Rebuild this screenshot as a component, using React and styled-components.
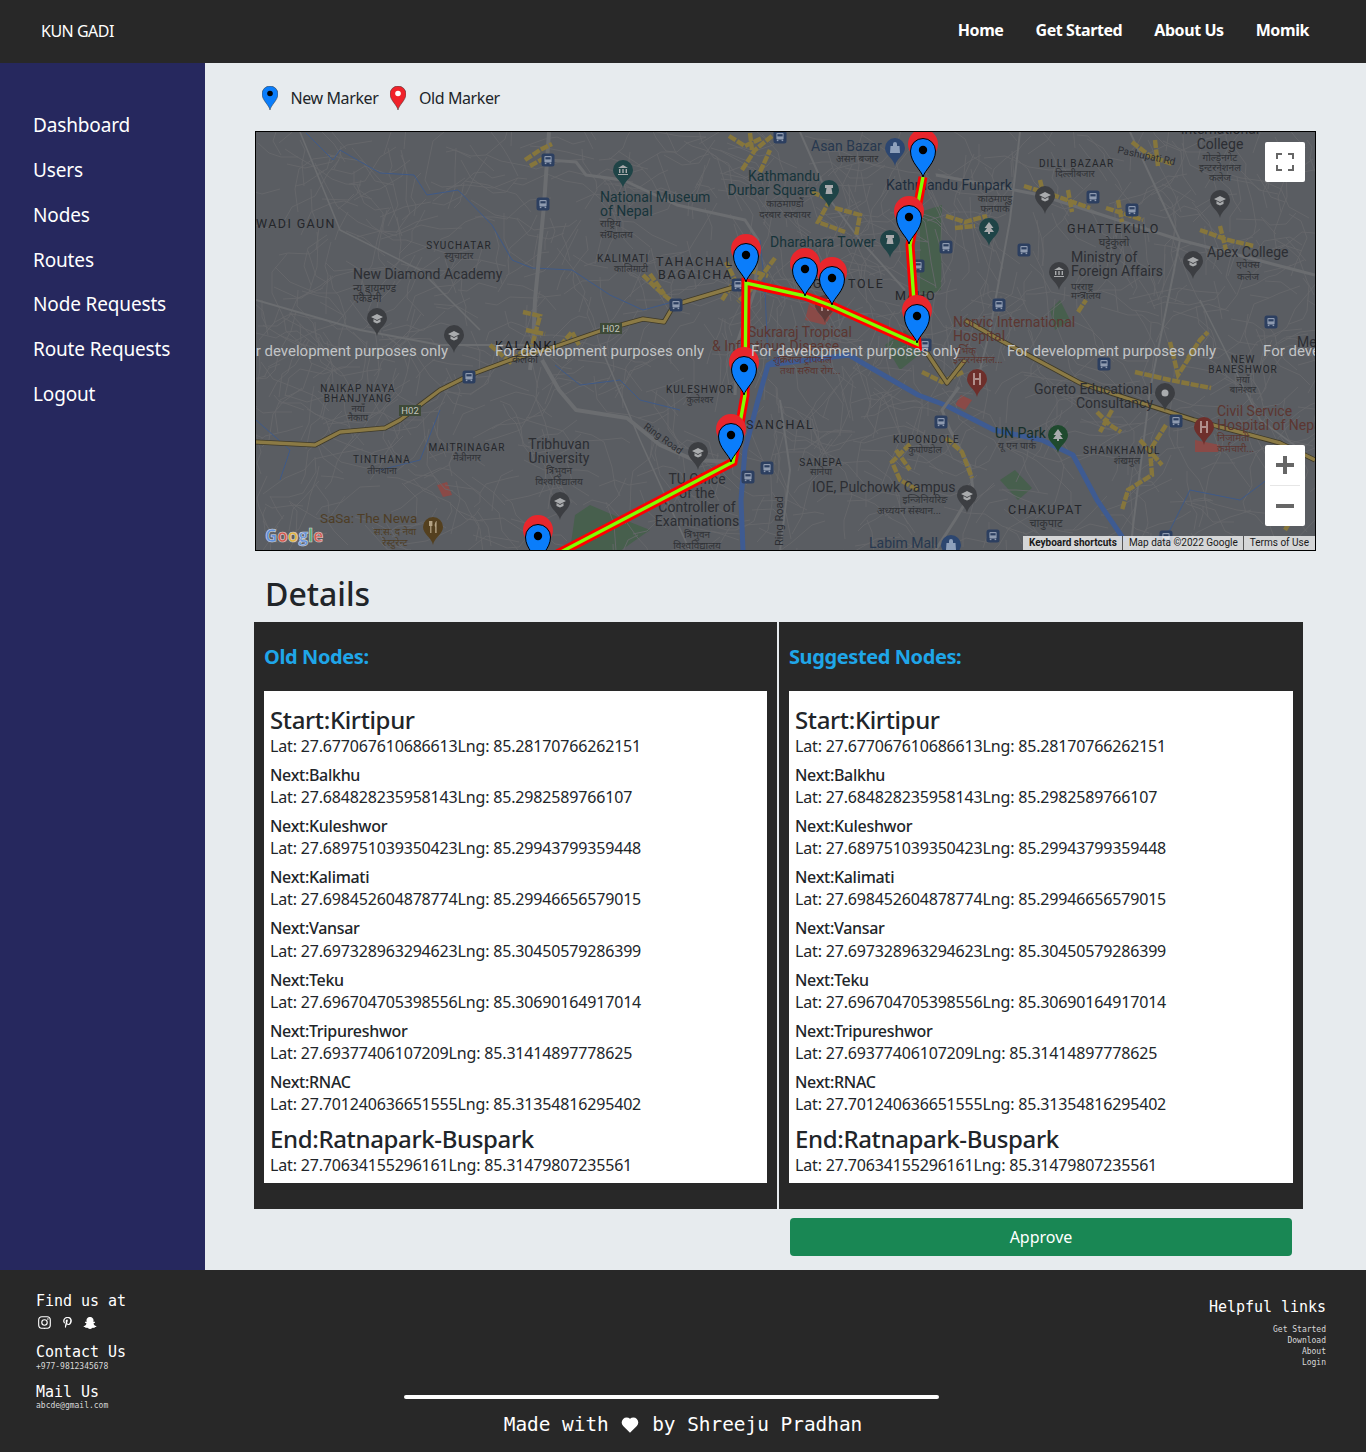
import React from "react";
import styled, { createGlobalStyle } from "styled-components";
import { BiLogoInstagram, BiLogoPinterestAlt, BiLogoSnapchat, BiSolidHeart } from "react-icons/bi";

const UI_FONT = `"Noto Sans", "Open Sans", sans-serif`;
const MONO_FONT = `"DejaVu Sans Mono", "Liberation Mono", monospace`;

const GlobalStyle = createGlobalStyle`
  html, body {
    margin: 0;
    padding: 0;
  }
  body {
    font-family: ${UI_FONT};
    font-size: 16px;
    color: #212529;
    background: #e7ebee;
  }
  * {
    box-sizing: border-box;
  }
`;

const oldNodes = [
  { name: "Balkhu", lat: "27.684828235958143", lng: "85.2982589766107" },
  { name: "Kuleshwor", lat: "27.689751039350423", lng: "85.29943799359448" },
  { name: "Kalimati", lat: "27.698452604878774", lng: "85.29946656579015" },
  { name: "Vansar", lat: "27.697328963294623", lng: "85.30450579286399" },
  { name: "Teku", lat: "27.696704705398556", lng: "85.30690164917014" },
  { name: "Tripureshwor", lat: "27.69377406107209", lng: "85.31414897778625" },
  { name: "RNAC", lat: "27.701240636651555", lng: "85.31354816295402" },
];

const sideLinks = ["Dashboard", "Users", "Nodes", "Routes", "Node Requests", "Route Requests", "Logout"];
const topLinks = ["Home", "Get Started", "About Us", "Momik"];
const helpLinks = ["Get Started", "Download", "About", "Login"];

// map drawing data, all coordinates are page pixels
const pins = [
  [538, 563],
  [731, 462],
  [744, 395],
  [917, 343],
  [832, 305],
  [805, 296],
  [746, 282],
  [909, 244],
  [923, 177],
];

const ROUTE = "923,177 910,245 917,344 832,306 805,296 746,283 745,395 733,462 538,564";

const greyRoads = [
  ["M549 132 L544 205 L535 300 L533 345 L530 370", 4],
  ["M542 360 L559 390 L576 410 L627 418 L660 445 L694 460 L735 462", 4],
  ["M549 160 L576 162 L586 175 L623 180 L677 205 L745 220 L758 240 L755 290 L738 340 L735 395", 3],
  ["M800 132 L830 200 L860 240 L905 290", 2],
  ["M936 175 L1040 195 L1180 240 L1315 275", 3],
  ["M1020 132 L1010 220 L990 330 L975 390", 2],
  ["M1130 132 L1180 240 L1150 390 L1130 551", 2],
  ["M959 387 L942 410 L950 430 L970 467 L973 490 L955 520 L935 551", 3],
  ["M256 300 L360 330 L440 345 L533 345", 2],
  ["M300 132 L340 230 L420 270 L480 330", 1.6],
  ["M600 345 L640 440 L690 551", 1.6],
  ["M780 400 L790 470 L780 551", 2],
  ["M1200 300 L1260 420 L1315 460", 1.6],
];

const highways = [
  "M256 442 L315 445 L340 432 L385 428 L400 420 L440 390 L470 375 L510 360 L554 347 L603 330 L643 319 L664 322 L674 305 L741 285",
  "M965 320 L1000 340 L1080 383 L1194 420 L1280 443 L1315 460",
  "M925 350 L947 383 L965 360",
];

// commercial street blobs, short and clustered like the source map
const yellowRoads = [
  "M729 136 L745 146 L762 138 M750 133 L752 150",
  "M812 192 L830 200 L818 222 L845 232 M835 208 L860 215 L856 236",
  "M946 216 L965 222 L987 216 M955 228 L975 226",
  "M1024 186 L1050 194 L1090 208 M1040 180 L1046 205 M1068 190 L1072 212",
  "M1106 208 L1125 214 L1143 220 M1118 200 L1122 222",
  "M1132 142 L1150 156 L1172 164 M1155 140 L1158 166",
  "M1200 230 L1228 240 L1254 246 M1220 226 L1226 250",
  "M1188 358 L1200 340 L1208 332",
  "M1078 312 L1086 300",
  "M1135 372 L1170 380 L1211 388 M1170 342 L1178 375 L1194 350",
  "M1166 425 L1150 450 L1152 475 L1128 490 L1122 510 M1140 440 L1162 465",
  "M1097 412 L1110 425 L1121 432 M1112 410 L1100 432",
  "M910 444 L892 462 L900 480 L918 490 M896 450 L910 470",
  "M946 438 L962 452 L972 478",
  "M922 372 L942 382 L963 372",
  "M525 160 L540 150 L552 144 M530 166 L548 156",
  "M742 170 L755 150 L772 136 M760 172 L770 150",
  "M643 275 L656 288 L670 300 M650 274 L664 294",
  "M722 300 L735 280 L726 262 M775 258 L755 285 L738 302 M748 270 L768 276",
  "M523 312 L540 316 L532 346 M526 330 L545 334",
  "M560 346 L572 332 L579 345",
  "M490 345 L510 362 L530 345",
  "M1285 530 L1300 505",
];

const rivers = "M780 358 L768 365 L758 400 L745 450 L741 500 L743 551 M768 365 L849 355 L866 365 L918 395 L945 405 L994 430 L1042 440 L1073 455 L1097 500 L1125 541";
const streams = "M306 133 L333 160 L340 150 L380 173 L414 175 L427 195 L458 190 L492 225 L512 260 L532 268 L572 270 L610 295 L643 310 L680 300 M760 240 L765 290 L768 360 M1130 551 L1170 530 L1190 490 L1240 500 L1280 470 M555 365 L580 385 L620 380 L640 400 L680 410 M256 420 L290 450 L280 480 M380 470 L420 460 L440 410";

const greens = [
  "M920 212 L942 205 L941 290 L920 298 Z",
  "M575 515 L590 505 L625 520 L650 530 L620 551 L570 551 Z",
  "M1000 480 L1015 470 L1032 488 L1018 500 Z",
  "M885 345 L905 330 L925 350 L900 370 Z",
  "M1050 310 L1060 300 L1070 320 L1055 330 Z",
];

const reds = [
  "M437 485 L447 482 L452 495 L443 497 Z",
  "M961 395 L972 400 L965 410 L955 405 Z",
  "M1195 440 L1220 445 L1218 452 L1195 452 Z",
  "M810 300 L835 310 L825 325 L805 320 Z",
];

const busStops = [
  [548, 160], [543, 204], [676, 305], [780, 137], [1093, 197], [1132, 210],
  [946, 247], [1024, 250], [918, 266], [999, 305], [1271, 322], [469, 377],
  [767, 468], [748, 477], [1104, 364], [941, 422], [1176, 421], [993, 536],
  [1166, 537], [925, 345], [738, 285],
];

const pois = [
  [377, 318, "#3c3e42", "cap"], [454, 335, "#3c3e42", "cap"], [560, 502, "#3c3e42", "cap"],
  [698, 452, "#3c3e42", "cap"], [967, 495, "#3c3e42", "cap"], [1045, 196, "#3c3e42", "cap"],
  [1220, 200, "#3c3e42", "cap"], [1193, 261, "#3c3e42", "cap"], [1059, 272, "#3c3e42", "bank"],
  [1165, 393, "#3c3e42", "dot"], [623, 170, "#1f4447", "bank"], [829, 190, "#1f4447", "tower"],
  [890, 240, "#1f4447", "tower"], [989, 228, "#1f4447", "tree"], [895, 148, "#2c4670", "bag"],
  [977, 379, "#6e2f2b", "h"], [1204, 427, "#6e2f2b", "h"], [1058, 435, "#1f4a2e", "tree"],
  [433, 527, "#54401f", "fork"], [951, 545, "#2c4670", "bag"], [825, 305, "#5f3a38", "h"],
];

const PLACE = "#24262a";
const TEAL = "#17343a";
const NAVY = "#27384f";
const BRICK = "#5c3631";
const BROWN = "#4e3d26";

// x, y, text, size, colour, spacing, anchor
const labels = [
  [256, 228, "WADI GAUN", 12.5, PLACE, 1.4],
  [459, 249, "SYUCHATAR", 10, PLACE, 1.1, "middle"],
  [459, 259, "स्युचाटार", 9.5, "#303236", 0, "middle"],
  [353, 279, "New Diamond Academy", 14, "#2c2e33"],
  [353, 292, "न्यू डायमण्ड", 10.5, "#303236"],
  [353, 302, "एकेडेमी", 10.5, "#303236"],
  [600, 202, "National Museum", 14, TEAL],
  [600, 216, "of Nepal", 14, TEAL],
  [600, 227, "राष्ट्रिय", 10, "#303236"],
  [600, 238, "संग्रहालय", 10, "#303236"],
  [597, 262, "KALIMATI", 10, PLACE, 1],
  [631, 272, "कालिमाटी", 9.5, "#303236", 0, "middle"],
  [656, 266, "TAHACHAL", 12.5, PLACE, 1.7],
  [658, 279, "BAGAICHA", 12.5, PLACE, 1.7],
  [784, 181, "Kathmandu", 14, TEAL, 0, "middle"],
  [772, 195, "Durbar Square", 14, TEAL, 0, "middle"],
  [785, 207, "काठमाण्डौं", 10, "#303236", 0, "middle"],
  [785, 218, "दरबार स्क्वायर", 10, "#303236", 0, "middle"],
  [811, 151, "Asan Bazar", 14, NAVY],
  [836, 162, "असन बजार", 10, "#303236"],
  [770, 247, "Dharahara Tower", 14, TEAL],
  [886, 190, "Kathmandu Funpark", 14, "#1f2d3d"],
  [995, 202, "काठमाण्डु", 10, "#303236", 0, "middle"],
  [995, 212, "फनपार्क", 10, "#303236", 0, "middle"],
  [1039, 167, "DILLI BAZAAR", 10, PLACE, 1],
  [1075, 177, "दिल्लीबजार", 9.5, "#303236", 0, "middle"],
  [1220, 134, "International", 14, "#2c2e33", 0, "middle"],
  [1220, 149, "College", 14, "#2c2e33", 0, "middle"],
  [1220, 161, "गोल्डेनगेट", 10, "#303236", 0, "middle"],
  [1220, 171, "इन्टरनेशनल", 10, "#303236", 0, "middle"],
  [1220, 181, "कलेज", 10, "#303236", 0, "middle"],
  [1067, 233, "GHATTEKULO", 12.5, PLACE, 1.5],
  [1114, 246, "घट्टेकुलो", 11, "#303236", 0, "middle"],
  [1071, 262, "Ministry of", 14, "#2c2e33"],
  [1071, 276, "Foreign Affairs", 14, "#2c2e33"],
  [1071, 290, "परराष्ट्र", 10, "#303236"],
  [1071, 299, "मन्त्रालय", 10, "#303236"],
  [1207, 257, "Apex College", 14, "#2c2e33"],
  [1248, 268, "एपेक्स", 10, "#303236", 0, "middle"],
  [1248, 280, "कलेज", 10, "#303236", 0, "middle"],
  [895, 300, "MAHO", 12.5, PLACE, 1],
  [803, 288, "AGAN TOLE", 12.5, PLACE, 1.7],
  [953, 327, "Norvic International", 14, BRICK],
  [953, 341, "Hospital", 14, BRICK],
  [748, 337, "Sukraraj Tropical", 14, BRICK],
  [712, 351, "& Infectious Disease", 14, BRICK],
  [495, 350, "KALANKI", 12.5, "#17181b", 1.7],
  [525, 363, "कलंकी", 10.5, "#303236", 0, "middle"],
  [358, 392, "NAIKAP NAYA", 10, PLACE, 1.1, "middle"],
  [358, 402, "BHANJYANG", 10, PLACE, 1.1, "middle"],
  [358, 412, "नयाँ", 9.5, "#303236", 0, "middle"],
  [358, 421, "नैकाप", 9.5, "#303236", 0, "middle"],
  [382, 463, "TINTHANA", 10, PLACE, 1.1, "middle"],
  [382, 474, "तीनथाना", 9.5, "#303236", 0, "middle"],
  [467, 451, "MAITRINAGAR", 10, PLACE, 1, "middle"],
  [467, 461, "मैत्रीनगर", 9.5, "#303236", 0, "middle"],
  [559, 449, "Tribhuvan", 14, "#2c2e33", 0, "middle"],
  [559, 463, "University", 14, "#2c2e33", 0, "middle"],
  [559, 474, "त्रिभुवन", 10, "#303236", 0, "middle"],
  [559, 485, "विश्वविद्यालय", 10, "#303236", 0, "middle"],
  [320, 523, "SaSa: The Newa", 13.5, BROWN],
  [395, 535, "स:स: द नेवा", 10, BROWN, 0, "middle"],
  [395, 546, "रेस्टुरेन्ट", 10, BROWN, 0, "middle"],
  [666, 393, "KULESHWOR", 10, PLACE, 1],
  [700, 403, "कुलेश्वर", 9.5, "#303236", 0, "middle"],
  [746, 429, "SANCHAL", 12.5, PLACE, 1.7],
  [697, 484, "TU Office", 14, "#2c2e33", 0, "middle"],
  [697, 498, "of the", 14, "#2c2e33", 0, "middle"],
  [697, 512, "Controller of", 14, "#2c2e33", 0, "middle"],
  [697, 526, "Examinations", 14, "#2c2e33", 0, "middle"],
  [697, 538, "त्रिभुवन", 10, "#303236", 0, "middle"],
  [697, 549, "विश्वविद्यालय", 10, "#303236", 0, "middle"],
  [893, 443, "KUPONDOLE", 10, PLACE, 1],
  [925, 453, "कुपोण्डोल", 9.5, "#303236", 0, "middle"],
  [821, 466, "SANEPA", 10, PLACE, 1, "middle"],
  [821, 475, "सानेपा", 9.5, "#303236", 0, "middle"],
  [812, 492, "IOE, Pulchowk Campus", 14, "#2c2e33"],
  [925, 503, "इन्जिनियरिङ", 10, "#303236", 0, "middle"],
  [877, 514, "अध्ययन संस्थान...", 10, "#303236"],
  [1008, 514, "CHAKUPAT", 12.5, PLACE, 1.5],
  [1046, 527, "चाकुपाट", 11, "#303236", 0, "middle"],
  [869, 548, "Labim Mall", 14, NAVY],
  [995, 438, "UN Park", 14, "#16302a"],
  [1017, 449, "यू एन पार्क", 10, "#303236", 0, "middle"],
  [1083, 454, "SHANKHAMUL", 10, PLACE, 1],
  [1127, 464, "शंखमुल", 9.5, "#303236", 0, "middle"],
  [1243, 363, "NEW", 10, PLACE, 1, "middle"],
  [1243, 373, "BANESHWOR", 10, PLACE, 1, "middle"],
  [1243, 383, "नयाँ", 9.5, "#303236", 0, "middle"],
  [1243, 393, "बानेश्वर", 9.5, "#303236", 0, "middle"],
  [1034, 394, "Goreto Educational", 14, "#2c2e33"],
  [1076, 408, "Consultancy", 14, "#2c2e33"],
  [1217, 416, "Civil Service", 14, BRICK],
  [1217, 430, "Hospital of Nepal", 14, BRICK],
  [1217, 441, "निजामती", 10, BRICK],
  [1217, 452, "कर्मचारी...", 10, BRICK],
  [953, 354, "नर्भिक", 10, BRICK],
  [953, 363, "इन्टरनेसनल...", 10, BRICK],
  [773, 363, "शुक्रराज ट्रपिकल", 10, BRICK],
  [780, 374, "तथा सरुवा रोग...", 10, BRICK],
  [1297, 347, "Me", 14, "#2c2e33"],
];

const watermarks = [239, 495, 751, 1007, 1263];

// small back-street network, same picture on each render
const buildStreets = () => {
  let seed = 4177;
  const rnd = () => {
    seed = (seed * 16807) % 2147483647;
    return seed / 2147483647;
  };
  let d = "";
  for (let i = 0; i < 900; i++) {
    let x = 256 + rnd() * 1060;
    let y = 132 + rnd() * 420;
    let a = rnd() * Math.PI * 2;
    d += `M${x.toFixed(0)} ${y.toFixed(0)}`;
    const steps = 2 + Math.floor(rnd() * 4);
    for (let s = 0; s < steps; s++) {
      a += (rnd() - 0.5) * 1.7;
      const len = 8 + rnd() * 20;
      x += Math.cos(a) * len;
      y += Math.sin(a) * len;
      d += `L${x.toFixed(0)} ${y.toFixed(0)}`;
    }
  }
  return d;
};

const streets = buildStreets();

const PIN_PATH = "M0 0 C-1.5 -7 -12.5 -14 -12.5 -26 A12.5 12.5 0 1 1 12.5 -26 C12.5 -14 1.5 -7 0 0 Z";

const RoutePin = ({ x, y }) => (
  <g transform={`translate(${x} ${y})`}>
    <circle cx="0" cy="-33" r="15" fill="#e8262c" />
    <path d={PIN_PATH} fill="#0a7dfb" stroke="#000" strokeWidth="1" />
    <circle cx="0" cy="-27" r="4.2" fill="#000" />
  </g>
);

const poiGlyph = {
  cap: <path d="M-6 -1 L0 -4 L6 -1 L0 2 Z M-3.5 1 V4 L0 5.5 L3.5 4 V1 L0 3 Z" fill="#a9abad" />,
  bank: <path d="M-5 -2 L0 -5 L5 -2 Z M-4 -1 H-2.6 V3 H-4 Z M-0.7 -1 H0.7 V3 H-0.7 Z M2.6 -1 H4 V3 H2.6 Z M-5 4 H5 V5 H-5 Z" fill="#a9abad" />,
  tower: <path d="M-4 -5 H4 V-2 H2.5 L3.5 4 H-3.5 L-2.5 -2 H-4 Z" fill="#a9abad" />,
  tree: <path d="M0 -6 L4.5 0 H2 L5 4 H1 V6 H-1 V4 H-5 L-2 0 H-4.5 Z" fill="#a9abad" />,
  bag: <path d="M-4.5 -2 H4.5 L5 5 H-5 Z M-2 -2 V-4 A2 2 0 0 1 2 -4 V-2" fill="#8ea0bb" />,
  h: <path d="M-4 -6 H-2 V-1 H2 V-6 H4 V6 H2 V1 H-2 V6 H-4 Z" fill="#b08f8b" />,
  dot: <circle r="3.5" fill="#a9abad" />,
  fork: <path d="M-4 -6 V-1 H-2.8 V6 H-1.6 V-1 H-0.6 V-6 Z M3.2 -6 C1.4 -4 1.4 -1 2.2 0 V6 H3.6 V-6 Z" fill="#b3a283" />,
};

const Poi = ({ x, y, color, kind }) => (
  <g transform={`translate(${x} ${y})`}>
    <path d="M0 18 C-1 11 -10 7 -10 0 A10 10 0 1 1 10 0 C10 7 1 11 0 18 Z" fill={color} />
    {poiGlyph[kind]}
  </g>
);

const BusStop = ({ x, y }) => (
  <g transform={`translate(${x} ${y})`}>
    <rect x="-6.5" y="-6.5" width="13" height="13" rx="2.5" fill="#2c3f60" />
    <rect x="-3.6" y="-4" width="7.2" height="6.6" rx="1" fill="#8f9bb0" />
    <rect x="-2.6" y="-2.8" width="5.2" height="2.2" fill="#2c3f60" />
    <rect x="-3.2" y="2.8" width="1.6" height="1.3" fill="#8f9bb0" />
    <rect x="1.6" y="2.8" width="1.6" height="1.3" fill="#8f9bb0" />
  </g>
);

const MapDrawing = () => (
  <MapSvg viewBox="256 132 1059 418" width="1059" height="418">
    <rect x="256" y="132" width="1059" height="418" fill="#5a5d62" />
    {greens.map((d) => (
      <path key={d} d={d} fill="#475f4d" />
    ))}
    {reds.map((d) => (
      <path key={d} d={d} fill="#8a4a47" />
    ))}
    <path d={streets} fill="none" stroke="#66686b" strokeWidth="0.9" />
    <path d={streams} fill="none" stroke="#3f5a88" strokeWidth="1" />
    <path d={rivers} fill="none" stroke="#3e5b92" strokeWidth="5" strokeLinejoin="round" />
    {greyRoads.map(([d, w]) => (
      <path key={d} d={d} fill="none" stroke="#6b6d70" strokeWidth={w} strokeLinejoin="round" />
    ))}
    {yellowRoads.map((d) => (
      <path key={d} d={d} fill="none" stroke="#86763c" strokeWidth="4.4" strokeDasharray="8 1.5" />
    ))}
    {highways.map((d) => (
      <g key={d}>
        <path d={d} fill="none" stroke="#3f3a28" strokeWidth="5" strokeLinejoin="round" />
        <path d={d} fill="none" stroke="#8b7a45" strokeWidth="3.4" strokeLinejoin="round" />
      </g>
    ))}

    <rect x="600" y="323" width="22" height="11" fill="#3e4a38" />
    <MapText x="611" y="332" fontSize="9.5" fill="#c3c6bf" textAnchor="middle">H02</MapText>
    <rect x="399" y="405" width="22" height="11" fill="#3e4a38" />
    <MapText x="410" y="414" fontSize="9.5" fill="#c3c6bf" textAnchor="middle">H02</MapText>

    {busStops.map(([x, y]) => (
      <BusStop key={`${x}-${y}`} x={x} y={y} />
    ))}
    {pois.map(([x, y, color, kind]) => (
      <Poi key={`${x}-${y}`} x={x} y={y} color={color} kind={kind} />
    ))}

    <MapText x="1117" y="153" fontSize="10" fill="#2c2e33" transform="rotate(12 1117 153)">Pashupati Rd</MapText>
    <MapText x="643" y="428" fontSize="10" fill="#2c2e33" transform="rotate(36 643 428)">Ring Road</MapText>
    <MapText x="783" y="546" fontSize="11" fill="#2c2e33" transform="rotate(-90 783 546)">Ring Road</MapText>
    {labels.map(([x, y, text, size, color, spacing = 0, anchor = "start"]) => (
      <MapText key={`${x}-${y}-${text}`} x={x} y={y} fontSize={size} fill={color} letterSpacing={spacing} textAnchor={anchor}>
        {text}
      </MapText>
    ))}

    <polyline points={ROUTE} fill="none" stroke="#ff0000" strokeWidth="9" strokeLinejoin="miter" />
    <polyline points={ROUTE} fill="none" stroke="#80ff00" strokeWidth="3.4" strokeLinejoin="miter" />
    {pins.map(([x, y]) => (
      <RoutePin key={`${x}-${y}`} x={x} y={y} />
    ))}

    {watermarks.map((x) => (
      <MapText key={x} x={x} y="356" fontSize="15" fill="#c2c4c6">For development purposes only</MapText>
    ))}

    <GoogleMark x="265" y="542" fontSize="17" stroke="#d5d6d8" strokeWidth="0.6">
      <tspan fill="#5f8fdc">G</tspan>
      <tspan fill="#d8584c">o</tspan>
      <tspan fill="#e3b23c">o</tspan>
      <tspan fill="#5f8fdc">g</tspan>
      <tspan fill="#58a868">l</tspan>
      <tspan fill="#d8584c">e</tspan>
    </GoogleMark>
  </MapSvg>
);

const LegendPin = ({ fill, hole }) => (
  <svg width="16" height="24" viewBox="-8 -24 16 24">
    <path d="M0 0 C-1 -5 -8 -10 -8 -16 A8 8 0 1 1 8 -16 C8 -10 1 -5 0 0 Z" fill={fill} stroke="#333" strokeWidth="0.5" />
    <circle cx="0" cy="-16.5" r="2.8" fill={hole} />
  </svg>
);

const NodeCard = ({ title, nodes }) => (
  <Column>
    <ColumnTitle>{title}</ColumnTitle>
    <NodeBox>
      <BigName>Start:Kirtipur</BigName>
      <Coords>Lat: 27.677067610686613Lng: 85.28170766262151</Coords>
      {nodes.map((n) => (
        <NextNode key={n.name}>
          <NextName>Next:{n.name}</NextName>
          <Coords>
            Lat: {n.lat}Lng: {n.lng}
          </Coords>
        </NextNode>
      ))}
      <BigName $end>End:Ratnapark-Buspark</BigName>
      <Coords>Lat: 27.70634155296161Lng: 85.31479807235561</Coords>
    </NodeBox>
  </Column>
);

const App = () => {
  return (
    <>
      <GlobalStyle />
      <Header>
        <Brand>KUN GADI</Brand>
        <TopNav>
          {topLinks.map((l) => (
            <TopLink key={l}>{l}</TopLink>
          ))}
        </TopNav>
      </Header>
      <Body>
        <Sidebar>
          {sideLinks.map((l) => (
            <SideLink key={l}>{l}</SideLink>
          ))}
        </Sidebar>
        <Main>
          <Legend>
            <LegendPin fill="#0a7dfb" hole="#000" />
            <LegendText>New Marker</LegendText>
            <LegendPin fill="#f0222a" hole="#fff" />
            <LegendText>Old Marker</LegendText>
          </Legend>
          <MapFrame>
            <MapDrawing />
            <FullscreenButton>
              <svg width="18" height="18" viewBox="0 0 18 18">
                <path d="M1 6 V1 H6 M12 1 H17 V6 M17 12 V17 H12 M6 17 H1 V12" fill="none" stroke="#666" strokeWidth="2" />
              </svg>
            </FullscreenButton>
            <ZoomBox>
              <ZoomButton>
                <svg width="18" height="18" viewBox="0 0 18 18">
                  <path d="M0 7 H7 V0 H11 V7 H18 V11 H11 V18 H7 V11 H0 Z" fill="#666" />
                </svg>
              </ZoomButton>
              <ZoomDivider />
              <ZoomButton>
                <svg width="18" height="18" viewBox="0 0 18 18">
                  <path d="M0 7 H18 V11 H0 Z" fill="#666" />
                </svg>
              </ZoomButton>
            </ZoomBox>
            <Attribution>
              <AttributionItem $bold>Keyboard shortcuts</AttributionItem>
              <AttributionItem>Map data ©2022 Google</AttributionItem>
              <AttributionItem>Terms of Use</AttributionItem>
            </Attribution>
          </MapFrame>
          <DetailsTitle>Details</DetailsTitle>
          <Compare>
            <NodeCard title="Old Nodes:" nodes={oldNodes} />
            <NodeCard title="Suggested Nodes:" nodes={oldNodes} />
            <ApproveCell>
              <ApproveButton>Approve</ApproveButton>
            </ApproveCell>
          </Compare>
        </Main>
      </Body>
      <Footer>
        <FooterLeft>
          <FooterHead>Find us at</FooterHead>
          <Socials>
            <BiLogoInstagram size={17} />
            <BiLogoPinterestAlt size={15} />
            <BiLogoSnapchat size={16} />
          </Socials>
          <FooterHead $gap="13px">Contact Us</FooterHead>
          <Tiny>+977-9812345678</Tiny>
          <FooterHead $gap="11px">Mail Us</FooterHead>
          <MailLine>abcde@gmail.com</MailLine>
        </FooterLeft>
        <FooterCenter>
          <Rule />
          <MadeWith>
            Made with <BiSolidHeart size={20} /> by Shreeju Pradhan
          </MadeWith>
        </FooterCenter>
        <FooterRight>
          <FooterHead>Helpful links</FooterHead>
          <HelpList>
            {helpLinks.map((l) => (
              <Tiny key={l}>{l}</Tiny>
            ))}
          </HelpList>
        </FooterRight>
      </Footer>
    </>
  );
};

const Header = styled.header`
  height: 63px;
  background: #282828;
  color: #fff;
  display: flex;
  align-items: center;
  justify-content: space-between;
  padding: 0 57px 4px 41px;
`;

const Brand = styled.div`
  font-size: 16px;
  letter-spacing: -0.5px;
  padding-top: 2px;
`;

const TopNav = styled.nav`
  display: flex;
  gap: 32px;
`;

const TopLink = styled.a`
  font-size: 16px;
  font-weight: 700;
  letter-spacing: -0.42px;
`;

const Body = styled.div`
  display: flex;
  height: 1207px;
`;

const Sidebar = styled.aside`
  width: 205px;
  flex: none;
  background: #26285e;
  padding: 40.3px 0 0 33px;
`;

const SideLink = styled.a`
  display: block;
  height: 44.8px;
  line-height: 44.8px;
  font-size: 19px;
  color: #fff;
  letter-spacing: -0.15px;
`;

const Main = styled.main`
  flex: 1;
  min-width: 0;
  background: #e7ebee;
  padding: 0 50px;
`;

const Legend = styled.div`
  height: 68px;
  padding: 2px 0 0 7px;
  display: flex;
  align-items: center;
`;

const LegendText = styled.span`
  font-size: 16px;
  margin: 0 12px 0 12.5px;
  letter-spacing: -0.4px;
`;

const MapFrame = styled.div`
  position: relative;
  width: 1061px;
  height: 420px;
  border: 1px solid #000;
  overflow: hidden;
`;

const MapSvg = styled.svg`
  display: block;
`;

const MapText = styled.text`
  font-family: Roboto, "Noto Sans", sans-serif;
`;

const GoogleMark = styled.text`
  font-family: "Open Sans", sans-serif;
  font-weight: 700;
`;

const FullscreenButton = styled.div`
  position: absolute;
  top: 10px;
  right: 10px;
  width: 40px;
  height: 40px;
  background: #fff;
  border-radius: 2px;
  display: flex;
  align-items: center;
  justify-content: center;
`;

const ZoomBox = styled.div`
  position: absolute;
  right: 10px;
  bottom: 24px;
  width: 40px;
  height: 81px;
  background: #fff;
  border-radius: 2px;
  display: flex;
  flex-direction: column;
  align-items: center;
`;

const ZoomButton = styled.div`
  height: 40px;
  display: flex;
  align-items: center;
  justify-content: center;
`;

const ZoomDivider = styled.div`
  width: 30px;
  height: 1px;
  background: #e6e6e6;
`;

const Attribution = styled.div`
  position: absolute;
  right: 0;
  bottom: 0;
  height: 14px;
  display: flex;
`;

const AttributionItem = styled.span`
  font-family: Roboto, "Liberation Sans", sans-serif;
  font-size: 10px;
  line-height: 14px;
  padding: 0 5px 0 6px;
  color: #1a1a1a;
  background: rgba(255, 255, 255, 0.75);
  border-left: 1px solid #555;
  font-weight: ${(p) => (p.$bold ? 700 : 400)};
  &:first-child {
    border-left: 0;
  }
  &:last-child {
    padding-right: 6px;
  }
`;

const DetailsTitle = styled.h2`
  margin: 0;
  height: 71px;
  padding: 26px 0 0 10px;
  font-size: 32px;
  line-height: 34px;
  font-weight: 500;
  color: #212529;
`;

const Compare = styled.section`
  width: 1049px;
  margin-left: -1px;
  display: grid;
  grid-template-columns: 523px 524px;
  column-gap: 2px;
`;

const Column = styled.div`
  background: #282828;
  padding: 23px 10px 26px;
`;

const ColumnTitle = styled.h5`
  margin: 0 0 22px;
  font-size: 20px;
  line-height: 24px;
  font-weight: 700;
  color: #1fa6e8;
  letter-spacing: -0.4px;
`;

const NodeBox = styled.div`
  background: #fff;
  padding: 15px 6px 5px;
  height: 492px;
`;

const BigName = styled.h4`
  margin: ${(p) => (p.$end ? "9px" : "0")} 0 -1px;
  font-size: 24px;
  line-height: 28.8px;
  font-weight: 500;
  letter-spacing: -0.35px;
`;

const NextNode = styled.div`
  margin-top: 8px;
`;

const NextName = styled.h6`
  margin: 0;
  font-size: 16px;
  line-height: 19.2px;
  font-weight: 500;
  letter-spacing: -0.3px;
`;

const Coords = styled.div`
  font-size: 16px;
  line-height: 24px;
  letter-spacing: -0.17px;
`;

const ApproveCell = styled.div`
  grid-column: 2;
  padding: 9px 11px 0;
`;

const ApproveButton = styled.button`
  display: block;
  width: 100%;
  height: 38px;
  border: 0;
  border-radius: 4px;
  background: #198754;
  color: #fff;
  font-family: ${UI_FONT};
  font-size: 16px;
`;

const Footer = styled.footer`
  height: 182px;
  background: #282828;
  color: #fff;
  font-family: ${MONO_FONT};
  display: grid;
  grid-template-columns: 368px 535px 1fr;
  padding: 0 40px 0 36px;
`;

const FooterLeft = styled.div`
  padding-top: 22px;
`;

const FooterHead = styled.div`
  font-size: 15px;
  line-height: 18px;
  letter-spacing: -0.04px;
  margin-top: ${(p) => p.$gap || 0};
`;

const Socials = styled.div`
  display: flex;
  align-items: center;
  gap: 7px;
  height: 15px;
  margin-top: 5px;
`;

const Tiny = styled.div`
  font-size: 8px;
  line-height: 11px;
  color: #d8d8d8;
`;

const MailLine = styled(Tiny)`
  margin-top: -1px;
`;

const FooterCenter = styled.div`
  padding-top: 125px;
`;

const Rule = styled.div`
  height: 4px;
  background: #fff;
  border-radius: 2px;
`;

const MadeWith = styled.div`
  margin-top: 13px;
  padding-left: 23px;
  font-size: 19.4px;
  line-height: 26px;
  display: flex;
  align-items: center;
  justify-content: center;
  white-space: pre;
  gap: 0;
`;

const FooterRight = styled.div`
  padding-top: 28px;
  text-align: right;
`;

const HelpList = styled.div`
  margin-top: 8px;
`;

export default App;
